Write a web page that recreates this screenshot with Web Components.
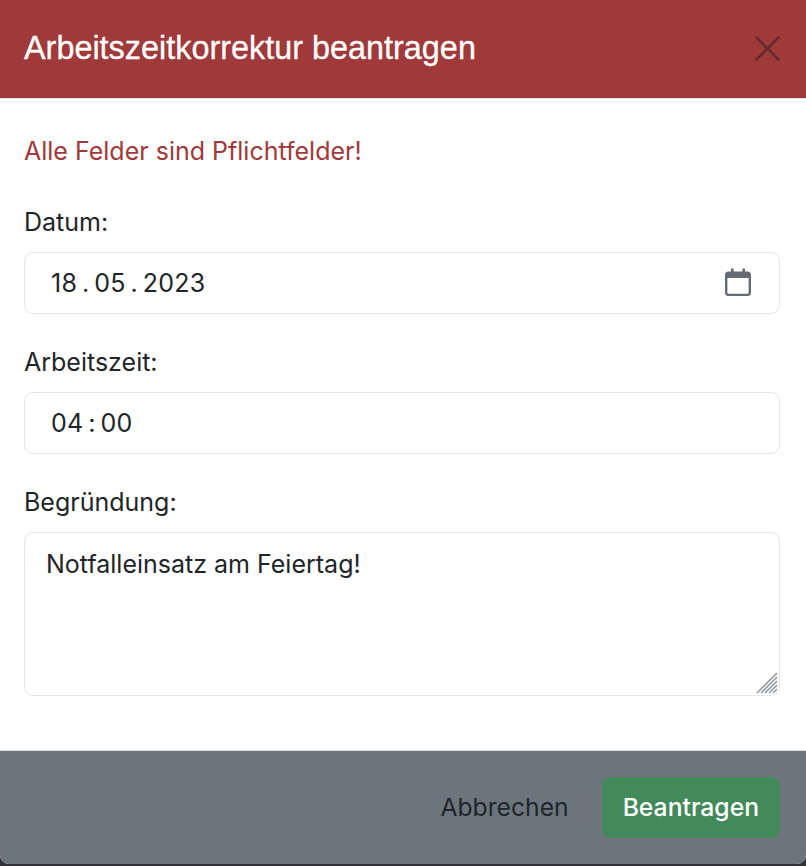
<!DOCTYPE html>
<html lang="de">
<head>
<meta charset="utf-8">
<title>Arbeitszeitkorrektur beantragen</title>
<style>
  html, body { margin: 0; height: 100%; background: #2f3236; }
  body { font-family: "Inter", "Liberation Sans", sans-serif; color: #212529; }
  .v { letter-spacing: 0.25px; }
</style>
</head>
<body>
<time-modal>
  <span slot="title">Arbeitszeitkorrektur beantragen</span>
  <p-hint>Alle Felder sind Pflichtfelder!</p-hint>
  <form-field label="Datum:" icon="calendar"><span class="v">18&#8201;.&#8201;05&#8201;.&#8201;2023</span></form-field>
  <form-field label="Arbeitszeit:"><span class="v">04&#8201;:&#8201;00</span></form-field>
  <form-field label="Begründung:" multiline>Notfalleinsatz am Feiertag!</form-field>
  <modal-button slot="footer">Abbrechen</modal-button>
  <modal-button slot="footer" variant="success">Beantragen</modal-button>
</time-modal>

<script>
class TimeModal extends HTMLElement {
  constructor() {
    super();
    this.attachShadow({ mode: 'open' });
    this.shadowRoot.innerHTML = `
      <style>
        :host {
          display: flex;
          flex-direction: column;
          height: 864px;
          background: #fff;
          border-radius: 0 0 9px 9px;
          overflow: hidden;
        }
        .header {
          height: 98px;
          flex: none;
          padding: 0 24px;
          display: flex;
          align-items: center;
          justify-content: space-between;
          background: #a03939;
          border-bottom: 1px solid #dee2e6;
          color: #fff;
          font-family: "Liberation Sans", sans-serif;
          font-size: 32.4px;
          -webkit-text-stroke: 0.3px #fff;
        }
        .title { margin-top: -2px; }
        .close { display: block; margin: -1px 0 0 0; }
        .body {
          flex: 1;
          padding: 34px 26px 0 24px;
          display: flex;
          flex-direction: column;
        }
        .footer {
          height: 114px;
          flex: none;
          box-sizing: border-box;
          padding: 0 26px 1px 24px;
          display: flex;
          align-items: center;
          justify-content: flex-end;
          gap: 12px;
          background: #6c757d;
          border-top: 1px solid #dee2e6;
        }
      </style>
      <div class="header">
        <div class="title"><slot name="title"></slot></div>
        <svg class="close" width="28" height="28" viewBox="0 0 28 28" fill="none" stroke="#5e2b2e" stroke-width="2.4">
          <path d="M1.5 1.5L25.5 25.5M25.5 1.5L1.5 25.5"/>
        </svg>
      </div>
      <div class="body"><slot></slot></div>
      <div class="footer"><slot name="footer"></slot></div>
    `;
  }
}

class PHint extends HTMLElement {
  constructor() {
    super();
    this.attachShadow({ mode: 'open' });
    this.shadowRoot.innerHTML = `
      <style>
        :host { display: block; color: #a03939; font-size: 25px; line-height: 36px; margin-bottom: 34.5px; }
      </style>
      <slot></slot>
    `;
  }
}

class FormField extends HTMLElement {
  constructor() {
    super();
    this.attachShadow({ mode: 'open' });
    const multi = this.hasAttribute('multiline');
    const calendar = this.getAttribute('icon') === 'calendar';
    this.shadowRoot.innerHTML = `
      <style>
        :host { display: block; margin-bottom: 29.5px; font-size: 25px; }
        label { display: block; line-height: 36px; margin-bottom: 12.5px; }
        .box {
          box-sizing: border-box;
          position: relative;
          height: 62px;
          padding: 0 27px 0 26px;
          display: flex;
          align-items: center;
          justify-content: space-between;
          border: 1.5px solid #e3e6ea;
          border-radius: 9px;
          background: #fff;
          line-height: 36px;
        }
        .box.multi {
          height: 164px;
          padding: 13px 21px;
          align-items: flex-start;
        }
        .box svg.cal { margin-top: -3px; }
        .grip { position: absolute; right: 1px; bottom: 1px; }
      </style>
      <label>${this.getAttribute('label')}</label>
      <div class="box ${multi ? 'multi' : ''}">
        <span><slot></slot></span>
        ${calendar ? `<svg class="cal" width="28" height="28" viewBox="0 0 28 28">
          <path fill="#666b72" d="M7 0.5h2.6v3H18.4v-3H21v3h2.5A3.5 3.5 0 0 1 27 7v17.5a3.5 3.5 0 0 1-3.5 3.5h-19A3.5 3.5 0 0 1 1 24.5V7a3.5 3.5 0 0 1 3.5-3.5H7z"/>
          <path fill="#fff" d="M3.4 10h21.2v14.5a1.2 1.2 0 0 1-1.2 1.2H4.6a1.2 1.2 0 0 1-1.2-1.2z"/>
        </svg>` : ''}
        ${multi ? `<svg class="grip" width="22" height="22" viewBox="0 0 22 22" fill="none" stroke="#8a8d91" stroke-width="1.4">
          <path d="M1 21L21 1M5 21L21 5M9 21L21 9M13 21L21 13M17 21L21 17"/>
        </svg>` : ''}
      </div>
    `;
  }
}

class ModalButton extends HTMLElement {
  constructor() {
    super();
    this.attachShadow({ mode: 'open' });
    this.shadowRoot.innerHTML = `
      <style>
        :host {
          display: block;
          box-sizing: border-box;
          height: 61px;
          padding: 0 21px;
          border-radius: 9px;
          font-size: 24.7px;
          line-height: 61px;
          color: #212529;
        }
        :host([variant="success"]) {
          background: #438a5b;
          color: #fff;
          font-weight: 500;
        }
      </style>
      <slot></slot>
    `;
  }
}

customElements.define('time-modal', TimeModal);
customElements.define('p-hint', PHint);
customElements.define('form-field', FormField);
customElements.define('modal-button', ModalButton);
</script>
</body>
</html>
